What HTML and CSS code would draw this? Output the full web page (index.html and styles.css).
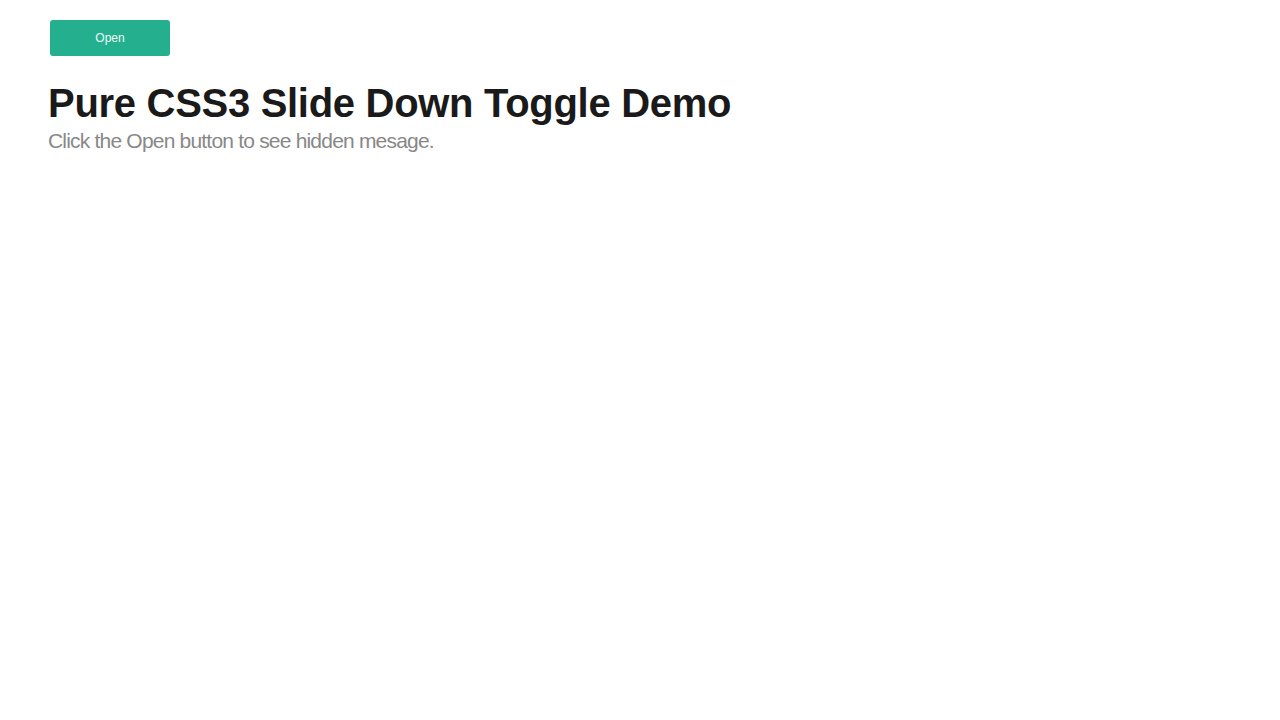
FILE: index.html
```html
<!DOCTYPE html>
<html>
<head>
<meta charset="utf-8">
<link rel="stylesheet" href="styles.css">
</head>
<body>
<div class="page">
  <button class="open-btn">Open</button>
  <h1 class="title">Pure CSS3 Slide Down Toggle Demo</h1>
  <p class="subtitle">Click the Open button to see hidden mesage.</p>
</div>
</body>
</html>
```
FILE: styles.css
```css
html, body {
  margin: 0;
  padding: 0;
  background: #ffffff;
}
body {
  font-family: "Liberation Sans", Arial, sans-serif;
}
.page {
  padding: 20px 48px;
}
.open-btn {
  display: block;
  margin-left: 2px;
  width: 120px;
  height: 36px;
  background: #24b08f;
  color: #eef9f5;
  border: none;
  border-radius: 3px;
  font-family: "Liberation Sans", Arial, sans-serif;
  font-size: 12px;
  padding: 0;
}
.title {
  margin: 23px 0 0 0;
  font-size: 40px;
  line-height: 48px;
  font-weight: bold;
  color: #1a1a1a;
  letter-spacing: -0.3px;
}
.subtitle {
  margin: 0;
  font-size: 21px;
  line-height: 28px;
  color: #888888;
  letter-spacing: -0.8px;
}
```
